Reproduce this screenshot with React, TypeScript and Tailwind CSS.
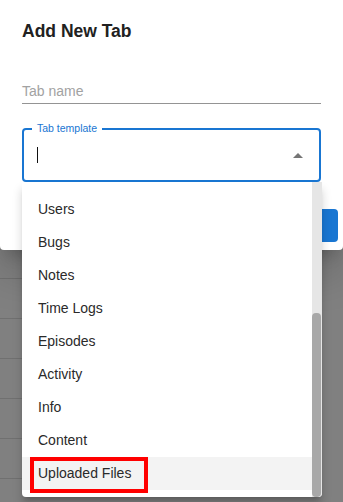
import React from "react";

const templates = [
  "Users",
  "Bugs",
  "Notes",
  "Time Logs",
  "Episodes",
  "Activity",
  "Info",
  "Content",
  "Uploaded Files",
];

export default function App() {
  return (
    <div className="relative w-[343px] h-[502px] overflow-hidden bg-[#808080] font-['Liberation_Sans',Arial,sans-serif] text-[#212121]">
      {/* dialog */}
      <div className="relative z-10 h-[250px] bg-white rounded-b-[4px] shadow-[0_11px_15px_-7px_rgba(0,0,0,0.2),0_24px_38px_3px_rgba(0,0,0,0.14)] flex flex-col">
        <h2 className="pl-[22px] pt-[20px] text-[17.5px] font-bold leading-[22px] text-[#212121]">
          Add New Tab
        </h2>

        <div className="px-[22px] mt-[37px]">
          <div className="h-[25px] border-b border-[#949494] text-[14px] leading-[18px] text-[#a2a2a2] pt-[3px]">
            Tab name
          </div>

          <div className="relative mt-[24px] h-[54px] rounded-[4px] border-2 border-[#1976d2] flex items-center">
            <span className="absolute -top-[9px] left-[8px] bg-white px-[5px] text-[10.5px] leading-[14px] text-[#1976d2]">
              Tab template
            </span>
            <span className="ml-[13px] w-[1px] h-[16px] bg-[#111]" />
            <svg className="ml-auto mr-[15px]" width="12" height="6" viewBox="0 0 12 6">
              <path d="M1 6 L6 1 L11 6 Z" fill="#757575" />
            </svg>
          </div>
        </div>

        <div className="flex justify-end pr-[5px] mt-[27px]">
          <button className="h-[33px] w-[80px] rounded-[4px] bg-[#1976d2] text-white text-[13px] font-bold">
            ADD
          </button>
        </div>
      </div>

      {/* page behind the backdrop */}
      <div className="flex flex-col pt-[28px]">
        {[0, 1, 2, 3, 4, 5].map((i) => (
          <div key={i} className="h-[40px] w-[300px] border-t border-[#707070]" />
        ))}
      </div>

      {/* open select menu */}
      <div className="absolute z-20 left-[22px] top-[182px] w-[300px] h-[315px] bg-white rounded-b-[4px] shadow-[0_5px_5px_-3px_rgba(0,0,0,0.2),0_8px_10px_1px_rgba(0,0,0,0.14)] flex overflow-hidden">
        <ul className="flex-1 pt-[11px]">
          {templates.map((t, i) => (
            <li
              key={t}
              className={`relative h-[33px] flex items-center pl-[16px] text-[14px] text-[#2a2a2a] ${
                i === templates.length - 1 ? "bg-[#f3f3f3]" : ""
              }`}
            >
              {t}
              {i === templates.length - 1 && (
                <span className="absolute left-[8px] top-0 w-[118px] h-[36px] border-[4px] border-[#ff0000]" />
              )}
            </li>
          ))}
        </ul>
        <div className="w-[10px] bg-[#e6e6e6] flex flex-col">
          <div className="mt-[131px] h-[184px] w-[9px] rounded-[4px] bg-[#a8a8a8]" />
        </div>
      </div>
    </div>
  );
}
